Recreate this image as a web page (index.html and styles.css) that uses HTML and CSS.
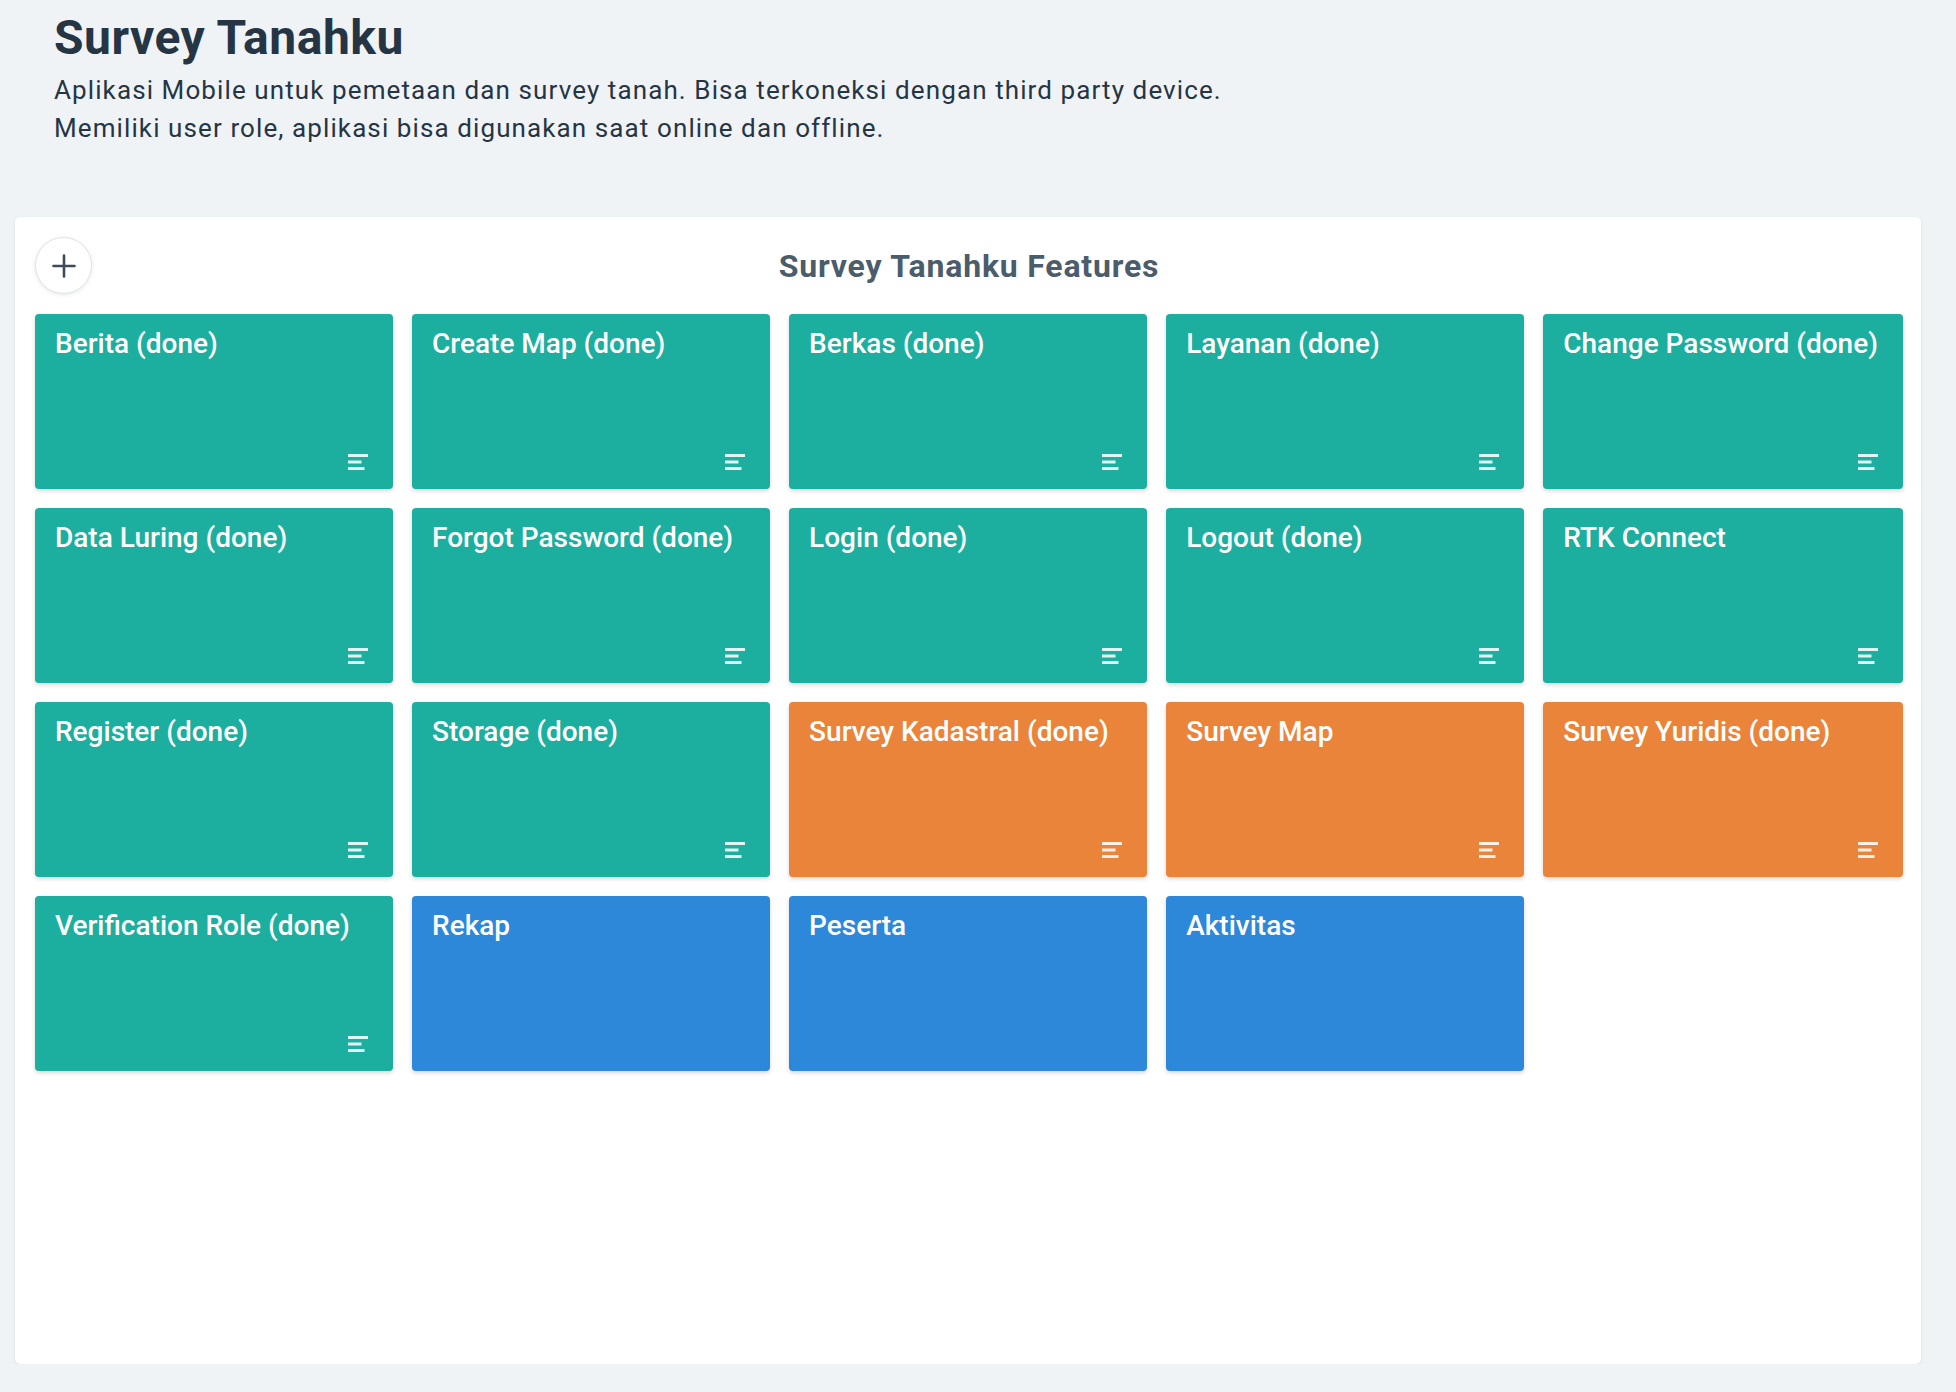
FILE: index.html
```html
<!DOCTYPE html>
<html lang="id">
<head>
<meta charset="utf-8">
<title>Survey Tanahku</title>
<link rel="stylesheet" href="styles.css">
</head>
<body>
<div class="page">
  <header class="intro">
    <h1 class="intro-title">Survey Tanahku</h1>
    <p class="intro-desc">Aplikasi Mobile untuk pemetaan dan survey tanah. Bisa terkoneksi dengan third party device.<br>Memiliki user role, aplikasi bisa digunakan saat online dan offline.</p>
  </header>

  <section class="board">
    <div class="board-head">
      <button class="add-btn" aria-label="Tambah">
        <svg width="24" height="24" viewBox="0 0 24 24"><path d="M12 1.5v21M1.5 12h21" stroke="#3d4a57" stroke-width="2.6" stroke-linecap="round" fill="none"/></svg>
      </button>
      <h2 class="board-title">Survey Tanahku Features</h2>
    </div>

    <div class="grid">
      <div class="card teal"><span class="card-title">Berita (done)</span><svg class="notes" width="20" height="16" viewBox="0 0 20 16"><rect x="0" y="0" width="20" height="3"/><rect x="0" y="6.5" width="13.5" height="3"/><rect x="0" y="13" width="16.5" height="3"/></svg></div>
      <div class="card teal"><span class="card-title">Create Map (done)</span><svg class="notes" width="20" height="16" viewBox="0 0 20 16"><rect x="0" y="0" width="20" height="3"/><rect x="0" y="6.5" width="13.5" height="3"/><rect x="0" y="13" width="16.5" height="3"/></svg></div>
      <div class="card teal"><span class="card-title">Berkas (done)</span><svg class="notes" width="20" height="16" viewBox="0 0 20 16"><rect x="0" y="0" width="20" height="3"/><rect x="0" y="6.5" width="13.5" height="3"/><rect x="0" y="13" width="16.5" height="3"/></svg></div>
      <div class="card teal"><span class="card-title">Layanan (done)</span><svg class="notes" width="20" height="16" viewBox="0 0 20 16"><rect x="0" y="0" width="20" height="3"/><rect x="0" y="6.5" width="13.5" height="3"/><rect x="0" y="13" width="16.5" height="3"/></svg></div>
      <div class="card teal"><span class="card-title">Change Password (done)</span><svg class="notes" width="20" height="16" viewBox="0 0 20 16"><rect x="0" y="0" width="20" height="3"/><rect x="0" y="6.5" width="13.5" height="3"/><rect x="0" y="13" width="16.5" height="3"/></svg></div>

      <div class="card teal"><span class="card-title">Data Luring (done)</span><svg class="notes" width="20" height="16" viewBox="0 0 20 16"><rect x="0" y="0" width="20" height="3"/><rect x="0" y="6.5" width="13.5" height="3"/><rect x="0" y="13" width="16.5" height="3"/></svg></div>
      <div class="card teal"><span class="card-title">Forgot Password (done)</span><svg class="notes" width="20" height="16" viewBox="0 0 20 16"><rect x="0" y="0" width="20" height="3"/><rect x="0" y="6.5" width="13.5" height="3"/><rect x="0" y="13" width="16.5" height="3"/></svg></div>
      <div class="card teal"><span class="card-title">Login (done)</span><svg class="notes" width="20" height="16" viewBox="0 0 20 16"><rect x="0" y="0" width="20" height="3"/><rect x="0" y="6.5" width="13.5" height="3"/><rect x="0" y="13" width="16.5" height="3"/></svg></div>
      <div class="card teal"><span class="card-title">Logout (done)</span><svg class="notes" width="20" height="16" viewBox="0 0 20 16"><rect x="0" y="0" width="20" height="3"/><rect x="0" y="6.5" width="13.5" height="3"/><rect x="0" y="13" width="16.5" height="3"/></svg></div>
      <div class="card teal"><span class="card-title">RTK Connect</span><svg class="notes" width="20" height="16" viewBox="0 0 20 16"><rect x="0" y="0" width="20" height="3"/><rect x="0" y="6.5" width="13.5" height="3"/><rect x="0" y="13" width="16.5" height="3"/></svg></div>

      <div class="card teal"><span class="card-title">Register (done)</span><svg class="notes" width="20" height="16" viewBox="0 0 20 16"><rect x="0" y="0" width="20" height="3"/><rect x="0" y="6.5" width="13.5" height="3"/><rect x="0" y="13" width="16.5" height="3"/></svg></div>
      <div class="card teal"><span class="card-title">Storage (done)</span><svg class="notes" width="20" height="16" viewBox="0 0 20 16"><rect x="0" y="0" width="20" height="3"/><rect x="0" y="6.5" width="13.5" height="3"/><rect x="0" y="13" width="16.5" height="3"/></svg></div>
      <div class="card orange"><span class="card-title">Survey Kadastral (done)</span><svg class="notes" width="20" height="16" viewBox="0 0 20 16"><rect x="0" y="0" width="20" height="3"/><rect x="0" y="6.5" width="13.5" height="3"/><rect x="0" y="13" width="16.5" height="3"/></svg></div>
      <div class="card orange"><span class="card-title">Survey Map</span><svg class="notes" width="20" height="16" viewBox="0 0 20 16"><rect x="0" y="0" width="20" height="3"/><rect x="0" y="6.5" width="13.5" height="3"/><rect x="0" y="13" width="16.5" height="3"/></svg></div>
      <div class="card orange"><span class="card-title">Survey Yuridis (done)</span><svg class="notes" width="20" height="16" viewBox="0 0 20 16"><rect x="0" y="0" width="20" height="3"/><rect x="0" y="6.5" width="13.5" height="3"/><rect x="0" y="13" width="16.5" height="3"/></svg></div>

      <div class="card teal"><span class="card-title">Verification Role (done)</span><svg class="notes" width="20" height="16" viewBox="0 0 20 16"><rect x="0" y="0" width="20" height="3"/><rect x="0" y="6.5" width="13.5" height="3"/><rect x="0" y="13" width="16.5" height="3"/></svg></div>
      <div class="card blue"><span class="card-title">Rekap</span></div>
      <div class="card blue"><span class="card-title">Peserta</span></div>
      <div class="card blue"><span class="card-title">Aktivitas</span></div>
    </div>
  </section>
</div>
</body>
</html>
```

FILE: styles.css
```css
* { box-sizing: border-box; }

html, body {
  margin: 0;
  padding: 0;
  background: #eff3f6;
}

body {
  font-family: Roboto, "Liberation Sans", sans-serif;
  color: #263544;
}

.page {
  padding: 0 35px 0 15px;
}

.intro {
  padding: 9px 39px 0 39px;
  height: 217px;
}

.intro-title {
  margin: 0;
  font-size: 48px;
  line-height: 1.2;
  font-weight: 700;
  color: #263544;
  letter-spacing: 0.5px;
}

.intro-desc {
  margin: 4px 0 0 0;
  font-size: 26px;
  line-height: 38px;
  letter-spacing: 1.1px;
  color: #263544;
}

.board {
  background: #ffffff;
  border-radius: 5px;
  box-shadow: 0 1px 3px rgba(30, 50, 70, 0.10);
  height: 1147px;
  padding: 20px 18px 20px 20px;
}

.board-head {
  position: relative;
  display: flex;
  align-items: center;
  justify-content: center;
  height: 57px;
  margin-bottom: 20px;
}

.add-btn {
  position: absolute;
  left: 0;
  top: 0;
  width: 57px;
  height: 57px;
  border-radius: 50%;
  border: 1px solid #dfe4ea;
  background: #ffffff;
  box-shadow: 0 1px 4px rgba(30, 50, 70, 0.10);
  display: flex;
  align-items: center;
  justify-content: center;
  padding: 0;
}

.board-title {
  margin: 0;
  font-size: 32px;
  font-weight: 700;
  letter-spacing: 0.8px;
  color: #4b5c6b;
}

.grid {
  display: grid;
  grid-template-columns: repeat(5, 1fr);
  grid-auto-rows: 175px;
  gap: 19px;
}

.card {
  display: flex;
  flex-direction: column;
  border-radius: 4px;
  padding: 13px 25px 19px 20px;
  box-shadow: 0 2px 4px rgba(0, 0, 0, 0.16);
  color: #ffffff;
}

.card.teal { background: #1cae9e; }
.card.orange { background: #e9843a; }
.card.blue { background: #2d88d9; }

.card-title {
  font-size: 28px;
  line-height: 1.2;
  font-weight: 500;
  white-space: nowrap;
}

.notes {
  margin-top: auto;
  align-self: flex-end;
  fill: rgba(255, 255, 255, 0.88);
}
```
